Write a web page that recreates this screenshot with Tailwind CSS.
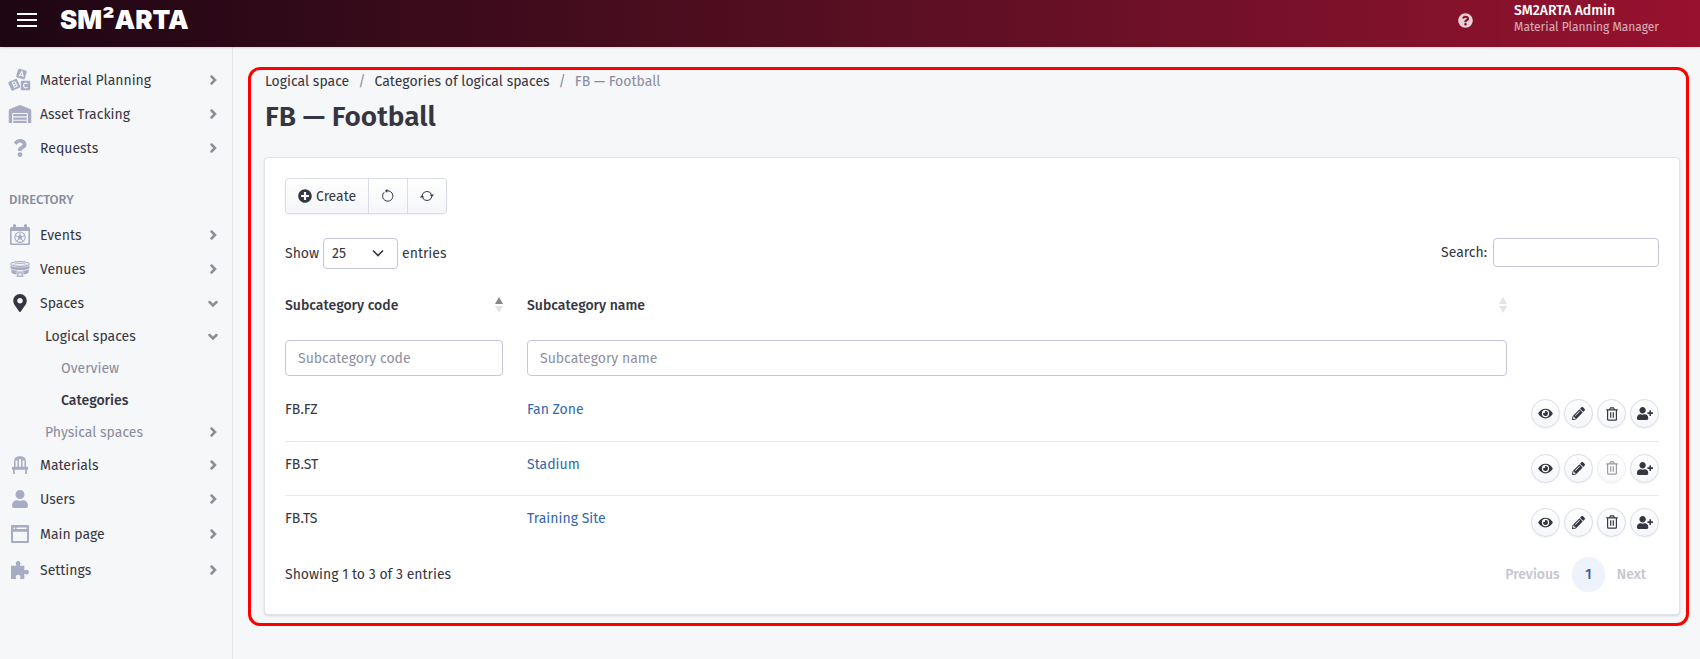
<!DOCTYPE html>
<html lang="en">
<head>
<meta charset="utf-8">
<meta name="viewport" content="width=device-width, initial-scale=1">
<title>FB — Football</title>
<script src="https://cdn.jsdelivr.net/npm/@tailwindcss/browser@4"></script>
</head>
<body class="flex min-h-screen flex-col bg-[#f5f7f9] font-['Fira_Sans','Roboto',sans-serif] text-[14px] leading-[21px] text-[#363642]">

<svg class="hidden" aria-hidden="true">
  <symbol id="chevron" viewBox="0 0 12 12"><path d="m4.500 2.500 3.500 3.500-3.500 3.500" fill="none" stroke="currentColor" stroke-width="2.500" stroke-linecap="round"/></symbol>
  <symbol id="chevron-down" viewBox="0 0 12 12"><path d="m2.500 5 3.500 3.500 3.500-3.500" fill="none" stroke="currentColor" stroke-width="2.500" stroke-linecap="round"/></symbol>
  <symbol id="blocks" viewBox="0 0 24 24">
    <g fill="currentColor"><rect x="9" y="1.500" width="9" height="9" rx="1.200" transform="rotate(15 13.500 6)"/><rect x="1.500" y="12" width="9.500" height="9.500" rx="1.200" transform="rotate(-24 6.250 16.750)"/><rect x="12.800" y="12.800" width="9.400" height="9.400" rx="1.200"/></g>
    <g fill="none" stroke="#f5f7f9" stroke-width="1.100"><path d="M11 8.300 13.900 3.500 15.300 9M12 7l2.800.7"/><path d="m4.400 14.600 2 4.600 1.900-.8c1.500-.8.600-2.600-.8-2.100 1-.9.200-2.600-1.200-2.300zM5.400 17l2.100-.8"/><path d="M19.600 15.800c-1.500-1.400-4-.4-4 1.700s2.500 3.100 4 1.700"/></g>
  </symbol>
  <symbol id="warehouse" viewBox="0 0 640 512"><path fill="currentColor" d="M504 352H136.400c-4.400 0-8 3.600-8 8l-.1 48c0 4.400 3.600 8 8 8H504c4.400 0 8-3.600 8-8v-48c0-4.400-3.600-8-8-8zm0 96H136.100c-4.400 0-8 3.600-8 8l-.1 48c0 4.400 3.600 8 8 8h368c4.400 0 8-3.600 8-8v-48c0-4.400-3.600-8-8-8zm0-192H136.600c-4.400 0-8 3.600-8 8l-.1 48c0 4.400 3.600 8 8 8H504c4.400 0 8-3.600 8-8v-48c0-4.400-3.600-8-8-8zm106.500-139L338.400 3.700a48.150 48.150 0 0 0-36.900 0L29.500 117C11.700 124.500 0 141.900 0 161.300V504c0 4.400 3.600 8 8 8h80c4.400 0 8-3.600 8-8V256c0-17.600 14.600-32 32.600-32h382.800c18 0 32.600 14.400 32.600 32v248c0 4.400 3.600 8 8 8h80c4.400 0 8-3.600 8-8V161.300c0-19.400-11.700-36.800-29.500-44.300z"/></symbol>
  <symbol id="question" viewBox="0 0 384 512"><path fill="currentColor" d="M202 0C122.200 0 70.500 32.700 29.900 91c-7.400 10.600-5.100 25.100 5.200 32.900l43.100 32.700c10.400 7.900 25.200 6 33.300-4.100 25-31.400 43.600-49.500 82.700-49.500 30.800 0 68.800 19.800 68.800 49.600 0 22.600-18.600 34.200-49 51.200-35.400 19.900-82.300 44.600-82.300 106.400V320c0 13.300 10.800 24 24 24h72.500c13.300 0 24-10.700 24-24v-5.800c0-42.800 125.300-44.600 125.300-160.600C377.500 66.300 286.900 0 202 0zM192 373.500a69.250 69.250 0 1 0 0 138.500 69.250 69.250 0 0 0 0-138.500z"/></symbol>
  <symbol id="calendar" viewBox="0 0 20 22">
    <path fill="currentColor" fill-rule="evenodd" d="M3 1.500a1.500 1.500 0 0 1 3 0V3h8V1.500a1.500 1.500 0 0 1 3 0V3h1.500A1.500 1.500 0 0 1 20 4.500v15a1.500 1.500 0 0 1-1.500 1.500h-17A1.500 1.500 0 0 1 0 19.500v-15A1.500 1.500 0 0 1 1.500 3H3zM1.600 7v11.800c0 .4.300.7.700.7h15.400c.4 0 .7-.3.700-.7V7z"/>
    <circle cx="10" cy="13.200" r="5.200" fill="none" stroke="currentColor" stroke-width="1.100"/>
    <path fill="currentColor" d="m10 10.800 2.500 1.800-1 2.900h-3l-1-2.900z"/>
    <path stroke="currentColor" d="M10 11V8.500M12.200 12.600l2.500-1M11.400 15l1.600 2M8.600 15 7 17M7.800 12.600l-2.500-1"/>
  </symbol>
  <symbol id="stadium" viewBox="0 0 20 16">
    <g fill="none" stroke="currentColor"><ellipse cx="10" cy="3" rx="9.200" ry="2.300" stroke-width="1.200"/><path d="M3.500 3.300c3-1.100 10-1.100 13 0" stroke-width=".8"/></g>
    <path fill="currentColor" d="M.5 4.800c4 2 15 2 19 0v2.600c-4 2-15 2-19 0zM1 8.600c4 1.900 14 1.900 18 0l-.6 3.200c-1.200 1-3 1.500-5 1.700V10.500H6.600v3c-2-.2-3.800-.7-5-1.700z"/>
    <path fill="none" stroke="currentColor" stroke-width="1.200" d="M7.800 15.400v-3.600h4.400v3.600M6.500 15.200h7"/>
  </symbol>
  <symbol id="marker" viewBox="0 0 384 512"><path fill="currentColor" d="M172.300 501.700C27 291 0 269.400 0 192 0 86 86 0 192 0s192 86 192 192c0 77.400-27 99-172.300 309.700-9.500 13.700-29.900 13.700-39.400 0zM192 272c44.200 0 80-35.800 80-80s-35.800-80-80-80-80 35.800-80 80 35.800 80 80 80z"/></symbol>
  <symbol id="chair" viewBox="0 0 16 18">
    <path fill="none" stroke="currentColor" stroke-width="1.500" d="M2.800 11V5.500C2.800 2.500 4.800.9 8 .9s5.200 1.600 5.200 4.600V11M6.200 11V3.200M9.800 11V3.200M4 4.200 8 2l4 2.200"/>
    <path fill="currentColor" d="M.8 10.800h14.400c.5 0 .8.400.8.900v1.500c0 .3-.2.600-.6.600h-.4V18h-1.700v-4.200H2.700V18H1v-4.200H.6c-.4 0-.6-.3-.6-.6v-1.500c0-.5.300-.9.800-.9z"/>
  </symbol>
  <symbol id="user" viewBox="0 0 448 512"><path fill="currentColor" d="M224 256c70.700 0 128-57.300 128-128S294.700 0 224 0 96 57.300 96 128s57.300 128 128 128zm89.600 32h-16.700c-22.200 10.200-46.900 16-72.900 16s-50.600-5.800-72.900-16h-16.700C60.200 288 0 348.200 0 422.400V464c0 26.500 21.500 48 48 48h352c26.500 0 48-21.500 48-48v-41.600c0-74.200-60.200-134.400-134.400-134.400z"/></symbol>
  <symbol id="window" viewBox="0 0 18 18">
    <path fill="currentColor" fill-rule="evenodd" d="M1 0h16a1 1 0 0 1 1 1v16a1 1 0 0 1-1 1H1a1 1 0 0 1-1-1V1a1 1 0 0 1 1-1zm1 6.700v9.300h14V6.700zM2.500 2.400v1.500H4V2.400zm3 0v1.500h10.200V2.400z"/>
  </symbol>
  <symbol id="puzzle" viewBox="0 0 18 18">
    <path fill="currentColor" d="M0 4.800h4.700c.6 0 .8-.5.500-1C4.900 3.300 4.700 3 4.700 2.300 4.700 1 5.800 0 7.100 0s2.400 1 2.400 2.300c0 .7-.2 1-.5 1.500-.3.500-.1 1 .5 1h3.800v3.900c0 .6.500.8 1 .5s.8-.5 1.400-.5c1.300 0 2.300 1.100 2.300 2.400s-1 2.400-2.300 2.400c-.6 0-.9-.2-1.400-.5s-1-.1-1 .5V18H9.500c-.6 0-.8-.5-.5-1 .3-.5.500-.8.500-1.300 0-1.200-1.100-2-2.400-2s-2.400.8-2.400 2c0 .5.200.8.500 1.300.3.500.1 1-.5 1H0z"/>
  </symbol>
  <symbol id="help" viewBox="0 0 512 512"><path fill="currentColor" d="M504 256c0 137-111 248-248 248S8 393 8 256C8 119.100 119 8 256 8s248 111.100 248 248zM262.700 90c-54.500 0-89.300 23-116.600 63.800-3.500 5.200-2.400 12.400 2.700 16.200l34.700 26.300c5.200 4 12.600 3 16.700-2.100 17.900-22.700 30.100-35.800 57.300-35.800 20.400 0 45.700 13.100 45.700 33 0 14.900-12.400 22.600-32.500 33.900C247.100 238.500 216 254.900 216 296v4c0 6.600 5.400 12 12 12h56c6.600 0 12-5.400 12-12v-1.300c0-28.500 83.200-29.700 83.200-106.700 0-58-60.200-102-116.500-102zM256 338a46 46 0 1 0 0 92 46 46 0 0 0 0-92z"/></symbol>
  <symbol id="plus" viewBox="0 0 512 512"><path fill="currentColor" d="M256 8C119 8 8 119 8 256s111 248 248 248 248-111 248-248S393 8 256 8zm144 276c0 6.600-5.400 12-12 12h-92v92c0 6.600-5.400 12-12 12h-56c-6.600 0-12-5.400-12-12v-92h-92c-6.600 0-12-5.400-12-12v-56c0-6.600 5.400-12 12-12h92v-92c0-6.600 5.400-12 12-12h56c6.600 0 12 5.400 12 12v92h92c6.600 0 12 5.400 12 12v56z"/></symbol>
  <symbol id="undo" viewBox="0 0 14 14"><path fill="none" stroke="currentColor" d="M3.200 3.200a5.200 5.200 0 1 0 3.800-1.400H5.500"/><path fill="currentColor" d="M6.300 0v3.800L3.800 1.900z"/></symbol>
  <symbol id="sync" viewBox="0 0 14 14"><path fill="none" stroke="currentColor" d="M2.200 6a5 5 0 0 1 9.400-.5M11.800 8a5 5 0 0 1-9.400.5"/><path fill="currentColor" d="M9.800 5.600H14l-2.200 2.600zM0 8.400h4.200L2.200 5.800z"/></symbol>
  <symbol id="eye" viewBox="0 0 576 512"><path fill="currentColor" d="M572.500 241.400C518.300 135.600 410.900 64 288 64S57.700 135.600 3.500 241.400a32.350 32.350 0 0 0 0 29.200C57.700 376.400 165.100 448 288 448s230.300-71.600 284.500-177.400a32.350 32.350 0 0 0 0-29.200zM288 400a144 144 0 1 1 144-144 143.930 143.930 0 0 1-144 144zm0-240a95.310 95.310 0 0 0-25.300 3.800 47.850 47.850 0 0 1-66.900 66.900A95.780 95.780 0 1 0 288 160z"/></symbol>
  <symbol id="pencil" viewBox="0 0 512 512"><path fill="currentColor" d="M497.900 142.100l-46.100 46.100c-4.700 4.700-12.300 4.700-17 0l-111-111c-4.700-4.700-4.700-12.300 0-17l46.100-46.100c18.700-18.700 49.100-18.700 67.900 0l60.100 60.100c18.800 18.700 18.800 49.100 0 67.900zM284.200 99.800L21.600 362.400.4 483.900c-2.900 16.400 11.400 30.600 27.800 27.800l121.500-21.300 262.600-262.600c4.700-4.700 4.700-12.300 0-17l-111-111c-4.800-4.700-12.400-4.700-17.100 0zM124.100 339.900c-5.500-5.500-5.500-14.300 0-19.800l154-154c5.500-5.500 14.300-5.500 19.800 0s5.500 14.300 0 19.800l-154 154c-5.500 5.500-14.300 5.500-19.800 0zM88 424h48v36.300l-64.500 11.300-31.100-31.100L51.700 376H88v48z"/></symbol>
  <symbol id="trash" viewBox="0 0 12 14"><path fill="none" stroke="currentColor" stroke-width="1.200" d="M.3 2.800h11.400M3.500 2.800 4.500.8h3l1 2M1.600 2.800v9.500c0 .5.400.9.900.9h7c.5 0 .9-.4.900-.9V2.800M4.700 5.200v5.600M7.300 5.200v5.600"/></symbol>
  <symbol id="user-plus" viewBox="0 0 640 512"><path fill="currentColor" d="M624 208h-64v-64c0-8.800-7.200-16-16-16h-32c-8.800 0-16 7.200-16 16v64h-64c-8.800 0-16 7.200-16 16v32c0 8.800 7.200 16 16 16h64v64c0 8.800 7.200 16 16 16h32c8.800 0 16-7.200 16-16v-64h64c8.800 0 16-7.200 16-16v-32c0-8.800-7.200-16-16-16zm-400 48c70.700 0 128-57.300 128-128S294.700 0 224 0 96 57.300 96 128s57.300 128 128 128zm89.600 32h-16.700c-22.200 10.200-46.900 16-72.900 16s-50.600-5.800-72.900-16h-16.700C60.200 288 0 348.200 0 422.400V464c0 26.500 21.500 48 48 48h352c26.500 0 48-21.500 48-48v-41.600c0-74.200-60.200-134.400-134.400-134.400z"/></symbol>
</svg>

<header class="relative flex h-[47px] items-start justify-between bg-linear-to-r from-[#1e0613] to-[#98112f] pr-[41px] pl-4 text-white shadow-sm">
  <div class="flex h-10 items-center gap-[22px]">
    <button type="button" aria-label="Toggle menu" class="flex w-[22px] flex-col gap-[4px] px-px">
      <span class="h-[2px] w-full bg-white"></span><span class="h-[2px] w-full bg-white"></span><span class="h-[2px] w-full bg-white"></span>
    </button>
    <a href="#" class="font-['Inter','Roboto',sans-serif] text-[26px] leading-7 font-black">SM²ARTA</a>
  </div>
  <div class="flex h-full items-start">
    <button type="button" aria-label="Help" class="mr-6 flex h-10 w-4 items-center justify-center text-white/80"><svg class="size-[15px]"><use href="#help"/></svg></button>
    <div class="h-full border-l border-black/5 pl-4">
      <div class="font-medium">SM2ARTA Admin</div>
      <div class="text-[12px] leading-3 text-white/65">Material Planning Manager</div>
    </div>
  </div>
</header>

<div class="flex grow">
  <nav aria-label="Main" class="w-[233px] shrink-0 border-r border-[#e4e6ea] pt-4 pr-[13px] pl-2">
    <ul>
      <li><a href="#" class="flex h-[34px] items-center gap-2"><svg class="size-6 text-[#a7abc3]"><use href="#blocks"/></svg><span class="grow">Material Planning</span><svg class="size-3 text-[#8d8d95]"><use href="#chevron"/></svg></a></li>
      <li><a href="#" class="flex h-[34px] items-center gap-2"><svg class="h-[18px] w-6 text-[#a7abc3]"><use href="#warehouse"/></svg><span class="grow">Asset Tracking</span><svg class="size-3 text-[#8d8d95]"><use href="#chevron"/></svg></a></li>
      <li><a href="#" class="flex h-[34px] items-center gap-2"><svg class="h-[18px] w-6 text-[#a7abc3]"><use href="#question"/></svg><span class="grow">Requests</span><svg class="size-3 text-[#8d8d95]"><use href="#chevron"/></svg></a></li>
    </ul>
    <h2 class="mt-6 mb-2 pl-px text-[13px] font-medium text-[#8a8c9e]">DIRECTORY</h2>
    <ul>
      <li><a href="#" class="flex h-[34px] items-center gap-2"><svg class="h-[22px] w-6 text-[#a7abc3]"><use href="#calendar"/></svg><span class="grow">Events</span><svg class="size-3 text-[#8d8d95]"><use href="#chevron"/></svg></a></li>
      <li><a href="#" class="flex h-[34px] items-center gap-2"><svg class="h-4 w-6 text-[#a7abc3]"><use href="#stadium"/></svg><span class="grow">Venues</span><svg class="size-3 text-[#8d8d95]"><use href="#chevron"/></svg></a></li>
      <li>
        <a href="#" class="flex h-[34px] items-center gap-2"><svg class="h-[18px] w-6 text-[#363642]"><use href="#marker"/></svg><span class="grow">Spaces</span><svg class="size-3 text-[#8d8d95]"><use href="#chevron-down"/></svg></a>
        <ul>
          <li>
            <a href="#" class="flex h-8 items-center pl-[37px]"><span class="grow">Logical spaces</span><svg class="size-3 text-[#8d8d95]"><use href="#chevron-down"/></svg></a>
            <ul>
              <li><a href="#" class="flex h-8 items-center pl-[53px] text-[#8a8c9e]">Overview</a></li>
              <li><a href="#" class="flex h-8 items-center pl-[53px] font-medium" aria-current="page">Categories</a></li>
            </ul>
          </li>
          <li><a href="#" class="flex h-8 items-center pl-[37px] text-[#8a8c9e]"><span class="grow">Physical spaces</span><svg class="size-3 text-[#8d8d95]"><use href="#chevron"/></svg></a></li>
        </ul>
      </li>
      <li><a href="#" class="flex h-[34px] items-center gap-2"><svg class="h-[18px] w-6 text-[#a7abc3]"><use href="#chair"/></svg><span class="grow">Materials</span><svg class="size-3 text-[#8d8d95]"><use href="#chevron"/></svg></a></li>
      <li><a href="#" class="flex h-[34px] items-center gap-2"><svg class="h-[18px] w-6 text-[#a7abc3]"><use href="#user"/></svg><span class="grow">Users</span><svg class="size-3 text-[#8d8d95]"><use href="#chevron"/></svg></a></li>
      <li><a href="#" class="flex h-9 items-center gap-2"><svg class="h-[18px] w-6 text-[#a7abc3]"><use href="#window"/></svg><span class="grow">Main page</span><svg class="size-3 text-[#8d8d95]"><use href="#chevron"/></svg></a></li>
      <li><a href="#" class="flex h-9 items-center gap-2"><svg class="h-[18px] w-6 text-[#a7abc3]"><use href="#puzzle"/></svg><span class="grow">Settings</span><svg class="size-3 text-[#8d8d95]"><use href="#chevron"/></svg></a></li>
    </ul>
  </nav>

  <main class="min-w-0 grow pt-5 pr-[11px] pb-8 pl-[15px]">
    <div class="rounded-xl border-3 border-[#ff0000] pt-px pr-[6px] pb-2 pl-[13px]">
      <nav aria-label="Breadcrumb" class="pl-px">
        <ol class="flex gap-2">
          <li><a href="#">Logical space</a></li>
          <li class="px-px text-[#8a8c9e]" aria-hidden="true">/</li>
          <li><a href="#">Categories of logical spaces</a></li>
          <li class="px-px text-[#8a8c9e]" aria-hidden="true">/</li>
          <li class="text-[#8a8c9e]" aria-current="page">FB — Football</li>
        </ol>
      </nav>
      <h1 class="mt-[7px] pl-px text-[28px] leading-9 font-semibold">FB — Football</h1>

      <section class="mt-[22px] rounded border border-[#dfe2e7] bg-white px-5 pt-5 pb-[22px] shadow-sm">
        <div class="flex h-9 w-fit divide-x divide-[#d9dce6] rounded border border-[#d9dce6] bg-linear-to-b from-white to-[#f5f6fa] shadow-xs">
          <button type="button" class="flex items-center gap-1 px-3"><svg class="size-[14px]"><use href="#plus"/></svg>Create</button>
          <button type="button" aria-label="Reset" class="flex w-[39px] items-center justify-center"><svg class="size-[14px]"><use href="#undo"/></svg></button>
          <button type="button" aria-label="Reload" class="flex w-[38px] items-center justify-center"><svg class="size-[14px]"><use href="#sync"/></svg></button>
        </div>

        <div class="mt-6 flex items-start justify-between">
          <label class="flex items-center gap-1">Show
            <span class="relative flex">
              <select class="h-[31px] w-[75px] appearance-none rounded border border-[#c6c6d8] bg-white px-2"><option>10</option><option selected>25</option><option>50</option></select>
              <svg class="pointer-events-none absolute top-[9px] right-[14px] size-3" viewBox="0 0 12 12"><path d="m1 3.500 5 5 5-5" fill="none" stroke="currentColor" stroke-width="1.700"/></svg>
            </span>
            entries</label>
          <label class="flex items-center gap-[6px]">Search: <input type="search" class="h-[29px] w-[166px] rounded-sm border border-[#c6c6d8] bg-white px-2"></label>
        </div>

        <table class="mt-3 w-full table-fixed text-left">
          <colgroup><col class="w-[230px]"><col><col class="w-[140px]"></colgroup>
          <thead>
            <tr class="h-12">
              <th scope="col" class="pr-3 font-medium" aria-sort="ascending"><div class="flex items-center justify-between">Subcategory code<svg class="h-4 w-2" viewBox="0 0 8 16"><path fill="#87878f" d="M4 0 8 7H0z"/><path fill="#e4e4e6" d="M4 16 0 9h8z"/></svg></div></th>
              <th scope="col" class="px-3 font-medium"><div class="flex items-center justify-between">Subcategory name<svg class="h-4 w-2" viewBox="0 0 8 16"><path fill="#e4e4e6" d="M4 0 8 7H0zM4 16 0 9h8z"/></svg></div></th>
              <td></td>
            </tr>
            <tr class="h-[58px]">
              <td class="pr-3"><input type="text" aria-label="Subcategory code" placeholder="Subcategory code" class="block h-9 w-full rounded border border-[#c6c6d8] bg-white px-3 placeholder:text-[#8f909f]"></td>
              <td class="px-3"><input type="text" aria-label="Subcategory name" placeholder="Subcategory name" class="block h-9 w-full rounded border border-[#c6c6d8] bg-white px-3 placeholder:text-[#8f909f]"></td>
              <td></td>
            </tr>
          </thead>
          <tbody class="divide-y divide-[#ebebef]">
            <tr class="h-[54px] align-top">
              <td class="pt-3">FB.FZ</td>
              <td class="px-3 pt-3"><a href="#" class="text-[#3367ad]">Fan Zone</a></td>
              <td class="pt-3"><div class="flex justify-end gap-1">
                <button type="button" aria-label="View" class="flex size-[29px] items-center justify-center rounded-full border border-[#d9dce6] bg-linear-to-b from-white to-[#f5f6fa] shadow-xs"><svg class="h-[13px] w-[15px]"><use href="#eye"/></svg></button>
                <button type="button" aria-label="Edit" class="flex size-[29px] items-center justify-center rounded-full border border-[#d9dce6] bg-linear-to-b from-white to-[#f5f6fa] shadow-xs"><svg class="size-[13px]"><use href="#pencil"/></svg></button>
                <button type="button" aria-label="Delete" class="flex size-[29px] items-center justify-center rounded-full border border-[#d9dce6] bg-linear-to-b from-white to-[#f5f6fa] shadow-xs"><svg class="h-[14px] w-3"><use href="#trash"/></svg></button>
                <button type="button" aria-label="Add user" class="flex size-[29px] items-center justify-center rounded-full border border-[#d9dce6] bg-linear-to-b from-white to-[#f5f6fa] shadow-xs"><svg class="h-[13px] w-4"><use href="#user-plus"/></svg></button>
              </div></td>
            </tr>
            <tr class="h-[54px] align-top">
              <td class="pt-3">FB.ST</td>
              <td class="px-3 pt-3"><a href="#" class="text-[#3367ad]">Stadium</a></td>
              <td class="pt-3"><div class="flex justify-end gap-1">
                <button type="button" aria-label="View" class="flex size-[29px] items-center justify-center rounded-full border border-[#d9dce6] bg-linear-to-b from-white to-[#f5f6fa] shadow-xs"><svg class="h-[13px] w-[15px]"><use href="#eye"/></svg></button>
                <button type="button" aria-label="Edit" class="flex size-[29px] items-center justify-center rounded-full border border-[#d9dce6] bg-linear-to-b from-white to-[#f5f6fa] shadow-xs"><svg class="size-[13px]"><use href="#pencil"/></svg></button>
                <button type="button" aria-label="Delete" disabled class="flex size-[29px] items-center justify-center rounded-full border border-[#d9dce6] bg-linear-to-b from-white to-[#f5f6fa] opacity-50 shadow-xs"><svg class="h-[14px] w-3"><use href="#trash"/></svg></button>
                <button type="button" aria-label="Add user" class="flex size-[29px] items-center justify-center rounded-full border border-[#d9dce6] bg-linear-to-b from-white to-[#f5f6fa] shadow-xs"><svg class="h-[13px] w-4"><use href="#user-plus"/></svg></button>
              </div></td>
            </tr>
            <tr class="h-[54px] align-top">
              <td class="pt-3">FB.TS</td>
              <td class="px-3 pt-3"><a href="#" class="text-[#3367ad]">Training Site</a></td>
              <td class="pt-3"><div class="flex justify-end gap-1">
                <button type="button" aria-label="View" class="flex size-[29px] items-center justify-center rounded-full border border-[#d9dce6] bg-linear-to-b from-white to-[#f5f6fa] shadow-xs"><svg class="h-[13px] w-[15px]"><use href="#eye"/></svg></button>
                <button type="button" aria-label="Edit" class="flex size-[29px] items-center justify-center rounded-full border border-[#d9dce6] bg-linear-to-b from-white to-[#f5f6fa] shadow-xs"><svg class="size-[13px]"><use href="#pencil"/></svg></button>
                <button type="button" aria-label="Delete" class="flex size-[29px] items-center justify-center rounded-full border border-[#d9dce6] bg-linear-to-b from-white to-[#f5f6fa] shadow-xs"><svg class="h-[14px] w-3"><use href="#trash"/></svg></button>
                <button type="button" aria-label="Add user" class="flex size-[29px] items-center justify-center rounded-full border border-[#d9dce6] bg-linear-to-b from-white to-[#f5f6fa] shadow-xs"><svg class="h-[13px] w-4"><use href="#user-plus"/></svg></button>
              </div></td>
            </tr>
          </tbody>
        </table>

        <div class="mt-2 flex items-center justify-between">
          <p>Showing 1 to 3 of 3 entries</p>
          <div class="flex items-center gap-3 pr-[13px] font-medium text-[#c4c6d0]">
            <button type="button" disabled>Previous</button>
            <button type="button" aria-current="page" class="h-[35px] w-[33px] rounded-full bg-[#eef2fa] text-[#2f5f9f]">1</button>
            <button type="button" disabled>Next</button>
          </div>
        </div>
      </section>
    </div>
  </main>
</div>
</body>
</html>
